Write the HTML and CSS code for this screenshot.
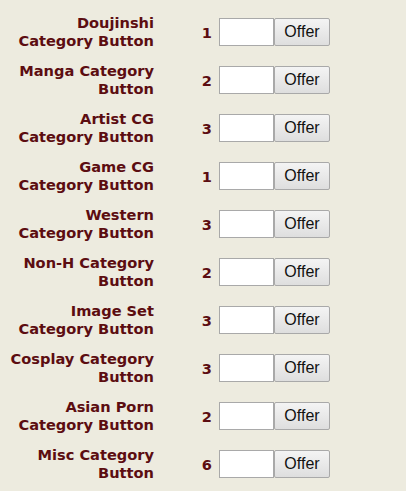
FILE: index.html
```html
<!DOCTYPE html>
<html>
<head>
<meta charset="utf-8">
<link rel="stylesheet" href="styles.css">
</head>
<body>
<div class="list">
  <div class="row"><div class="label">Doujinshi<br>Category Button</div><div class="num">1</div><input class="field" type="text"><button class="offer">Offer</button></div>
  <div class="row"><div class="label">Manga Category<br>Button</div><div class="num">2</div><input class="field" type="text"><button class="offer">Offer</button></div>
  <div class="row"><div class="label">Artist CG<br>Category Button</div><div class="num">3</div><input class="field" type="text"><button class="offer">Offer</button></div>
  <div class="row"><div class="label">Game CG<br>Category Button</div><div class="num">1</div><input class="field" type="text"><button class="offer">Offer</button></div>
  <div class="row"><div class="label">Western<br>Category Button</div><div class="num">3</div><input class="field" type="text"><button class="offer">Offer</button></div>
  <div class="row"><div class="label">Non-H Category<br>Button</div><div class="num">2</div><input class="field" type="text"><button class="offer">Offer</button></div>
  <div class="row"><div class="label">Image Set<br>Category Button</div><div class="num">3</div><input class="field" type="text"><button class="offer">Offer</button></div>
  <div class="row"><div class="label">Cosplay Category<br>Button</div><div class="num">3</div><input class="field" type="text"><button class="offer">Offer</button></div>
  <div class="row"><div class="label">Asian Porn<br>Category Button</div><div class="num">2</div><input class="field" type="text"><button class="offer">Offer</button></div>
  <div class="row"><div class="label">Misc Category<br>Button</div><div class="num">6</div><input class="field" type="text"><button class="offer">Offer</button></div>
</div>
</body>
</html>
```
FILE: styles.css
```css
html, body {
  margin: 0;
  padding: 0;
  background: #edebdf;
}
body {
  font-family: "DejaVu Sans", Verdana, sans-serif;
  font-weight: bold;
  font-size: 14.6px;
  color: #5c0d11;
}
.list {
  display: flex;
  flex-direction: column;
  gap: 12px;
  padding: 14px 0 0 2px;
}
.row {
  display: flex;
  align-items: center;
  height: 36px;
}
.label {
  width: 152px;
  text-align: right;
  line-height: 18px;
  white-space: nowrap;
}
.num {
  width: 65px;
  text-align: right;
  padding-right: 7px;
  box-sizing: border-box;
}
.field {
  box-sizing: border-box;
  width: 55px;
  height: 28px;
  margin: 0;
  border: 1px solid #a9a9a9;
  background: #fff;
  padding: 0;
}
.offer {
  box-sizing: border-box;
  width: 56px;
  height: 28px;
  margin: 0;
  border: 1px solid #a9a9a9;
  border-radius: 2px;
  background: linear-gradient(#f4f4f4, #dedede);
  font-family: "Liberation Sans", Arial, sans-serif;
  font-weight: normal;
  font-size: 16px;
  color: #111;
  padding: 0;
}
```
